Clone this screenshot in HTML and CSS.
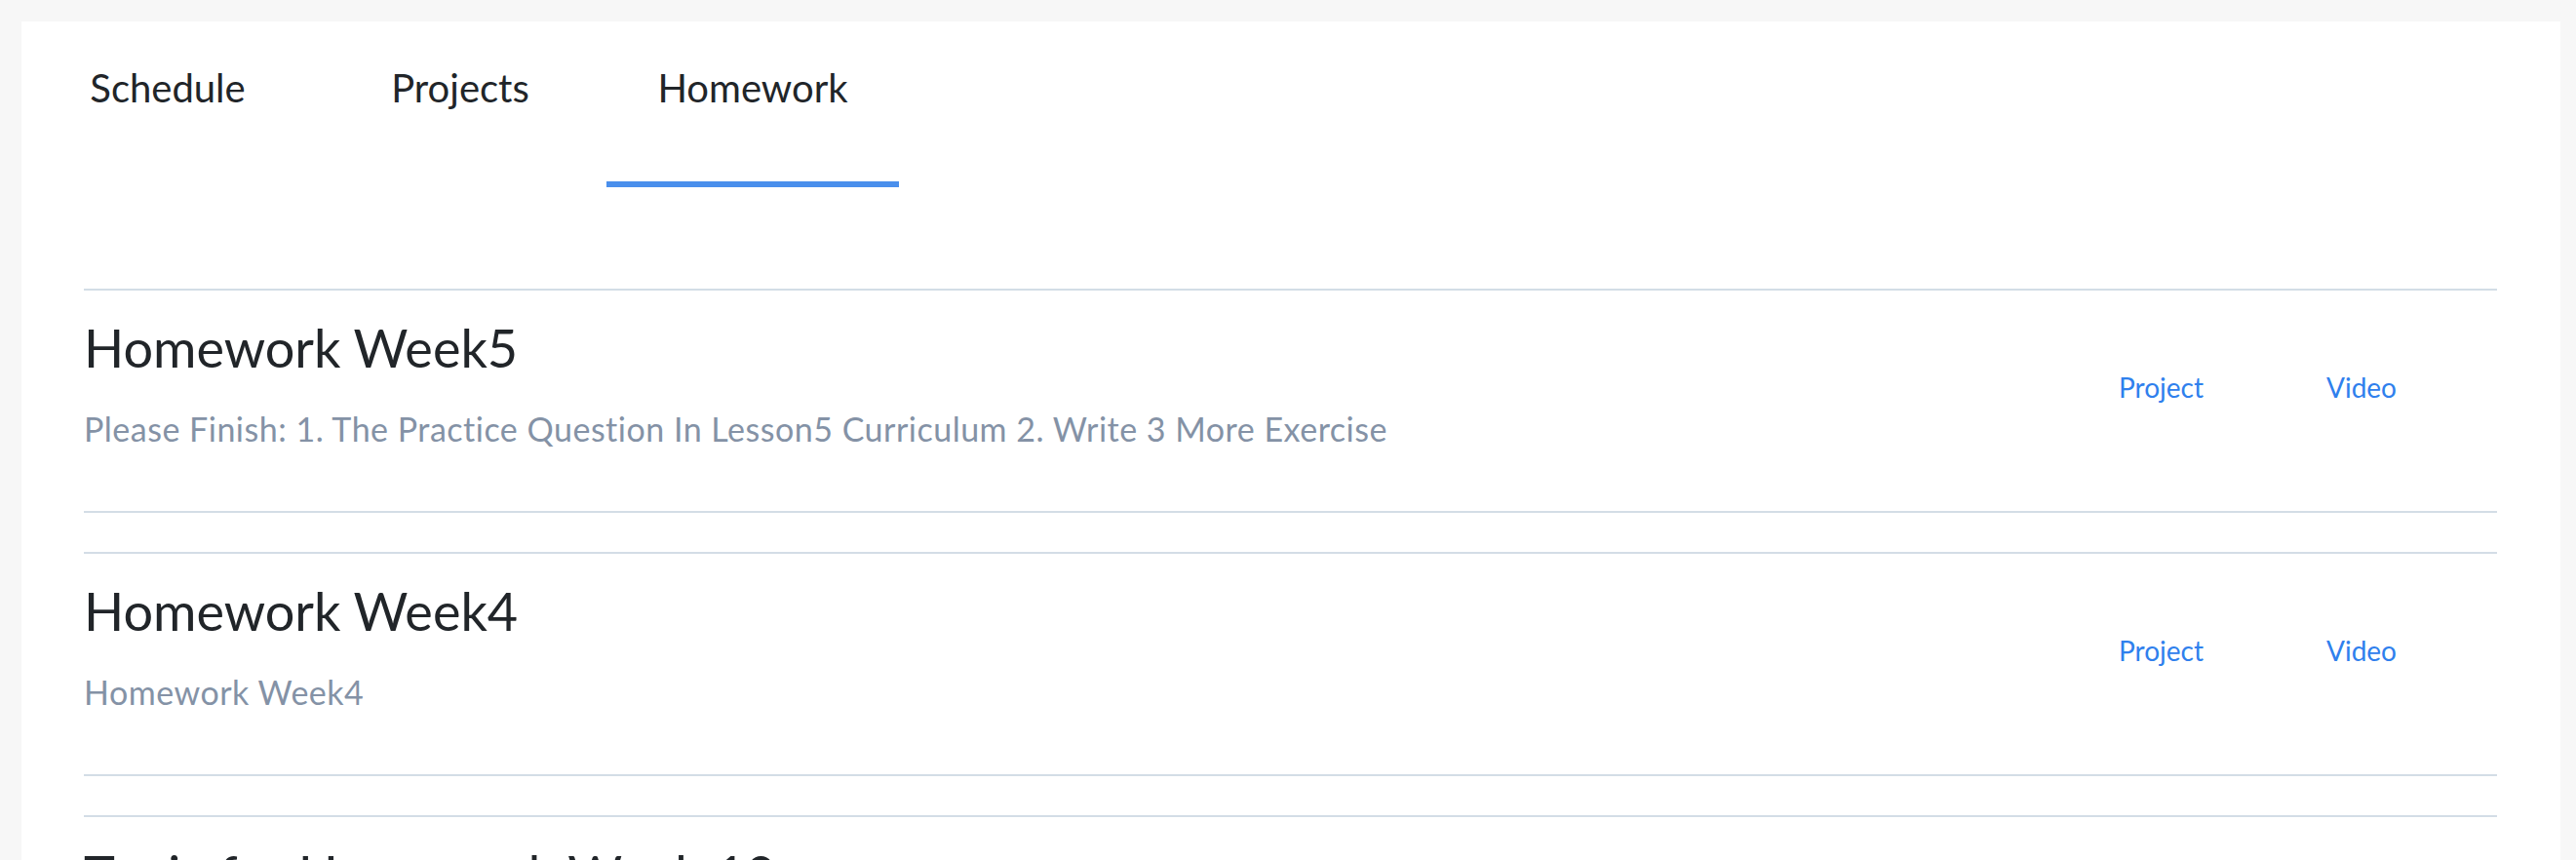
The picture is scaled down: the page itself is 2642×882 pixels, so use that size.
FILE: index.html
```html
<!DOCTYPE html>
<html lang="en">
<head>
<meta charset="utf-8">
<title>Homework</title>
<link rel="stylesheet" href="styles.css">
</head>
<body>
<div class="card">
  <nav class="tabs">
    <a class="tab">Schedule</a>
    <a class="tab">Projects</a>
    <a class="tab active">Homework</a>
  </nav>
  <ul class="list">
    <li class="item">
      <div class="info">
        <h3 class="title">Homework Week5</h3>
        <p class="desc">Please Finish: 1. The Practice Question In Lesson5 Curriculum 2. Write 3 More Exercise</p>
      </div>
      <div class="links">
        <a class="link">Project</a>
        <a class="link">Video</a>
      </div>
    </li>
    <li class="item">
      <div class="info">
        <h3 class="title">Homework Week4</h3>
        <p class="desc">Homework Week4</p>
      </div>
      <div class="links">
        <a class="link">Project</a>
        <a class="link">Video</a>
      </div>
    </li>
    <li class="item">
      <div class="info">
        <h3 class="title">Topic for Homework Week 10</h3>
        <p class="desc">Homework Week3</p>
      </div>
      <div class="links">
        <a class="link">Project</a>
        <a class="link">Video</a>
      </div>
    </li>
  </ul>
</div>
</body>
</html>
```
FILE: styles.css
```css
html, body {
  margin: 0;
  height: 100%;
  overflow: hidden;
}
body {
  background: #f7f7f7;
  padding: 22px 16px 0 22px;
  box-sizing: border-box;
  font-family: Lato, "Noto Sans", sans-serif;
  color: #212529;
}
.card {
  background: #fff;
  min-height: 100%;
}
.tabs {
  display: flex;
}
.tab {
  width: 300px;
  text-align: center;
  font-size: 40px;
  line-height: 48px;
  padding-top: 44px;
  padding-bottom: 72px;
  border-bottom: 6px solid transparent;
  color: #212529;
  cursor: pointer;
}
.tab.active {
  border-bottom-color: #4a8fec;
}
.list {
  list-style: none;
  margin: 0;
  padding: 104px 65px 0 64px;
}
.item {
  display: flex;
  justify-content: space-between;
  border-top: 2px solid #d3dde6;
  border-bottom: 2px solid #d3dde6;
  margin-bottom: 40px;
  padding: 26px 0 60px;
}
.title {
  margin: 0;
  font-size: 54px;
  line-height: 65px;
  font-weight: 400;
  color: #212529;
}
.desc {
  margin: 27px 0 0;
  font-size: 34px;
  line-height: 48px;
  letter-spacing: 0.5px;
  color: #8492a6;
}
.links {
  display: flex;
  gap: 126px;
  padding: 52px 103px 0 0;
}
.link {
  font-size: 28px;
  line-height: 42px;
  color: #2f80ed;
  cursor: pointer;
}
```
